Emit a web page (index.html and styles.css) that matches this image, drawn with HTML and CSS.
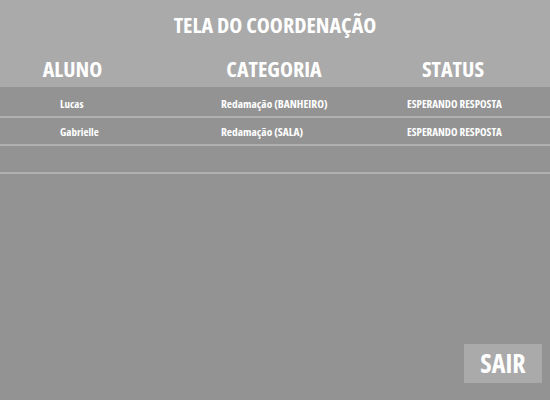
FILE: index.html
```html
<!DOCTYPE html>
<html lang="pt">
<head>
<meta charset="utf-8">
<title>Tela do Coordenação</title>
<link rel="stylesheet" href="styles.css">
</head>
<body>
<div class="page">
  <header class="top">
    <h1 class="title">TELA DO COORDENAÇÃO</h1>
    <div class="heads">
      <span class="h h-aluno">ALUNO</span>
      <span class="h h-cat">CATEGORIA</span>
      <span class="h h-status">STATUS</span>
    </div>
  </header>
  <div class="rows">
    <div class="row">
      <span class="c c-aluno">Lucas</span>
      <span class="c c-cat">Redamação (BANHEIRO)</span>
      <span class="c c-status">ESPERANDO RESPOSTA</span>
    </div>
    <div class="row">
      <span class="c c-aluno">Gabrielle</span>
      <span class="c c-cat">Redamação (SALA)</span>
      <span class="c c-status">ESPERANDO RESPOSTA</span>
    </div>
    <div class="row"></div>
  </div>
  <div class="foot">
    <button class="sair">SAIR</button>
  </div>
</div>
</body>
</html>
```

FILE: styles.css
```css
* { box-sizing: border-box; }
html, body { margin: 0; padding: 0; }
body {
  width: 550px;
  height: 400px;
  overflow: hidden;
  background: #939393;
  font-family: "Open Sans", "DejaVu Sans Condensed", sans-serif;
  font-stretch: 75%;
  font-weight: 700;
  color: #ffffff;
}
.page {
  height: 400px;
  display: flex;
  flex-direction: column;
}
.top {
  background: #aaaaaa;
  height: 87px;
  display: flex;
  flex-direction: column;
}
.title {
  margin: 0;
  height: 48px;
  font-size: 22px;
  line-height: 48px;
  text-align: center;
  font-weight: 700;
}
.heads {
  display: flex;
  height: 39px;
  align-items: center;
  font-size: 22px;
}
.h { display: block; text-align: center; }
.h-aluno { width: 145px; }
.h-cat { width: 258px; }
.h-status { width: 100px; margin-left: 0; }
.rows {
  padding-top: 3px;
}
.row {
  height: 28px;
  border-bottom: 2px solid #b0b0b0;
  display: flex;
  align-items: center;
  font-size: 11px;
}
.c { display: block; }
.c-aluno { width: 221px; padding-left: 60px; }
.c-cat { width: 186px; font-size: 11.4px; }
.foot {
  flex: 1;
  display: flex;
  justify-content: flex-end;
  align-items: flex-end;
  padding: 0 8px 17px 0;
}
.sair {
  width: 78px;
  height: 39px;
  background: #aaaaaa;
  border: none;
  color: #ffffff;
  font-family: inherit;
  font-stretch: inherit;
  font-weight: 700;
  font-size: 26px;
  padding: 0;
  line-height: 39px;
}
```
